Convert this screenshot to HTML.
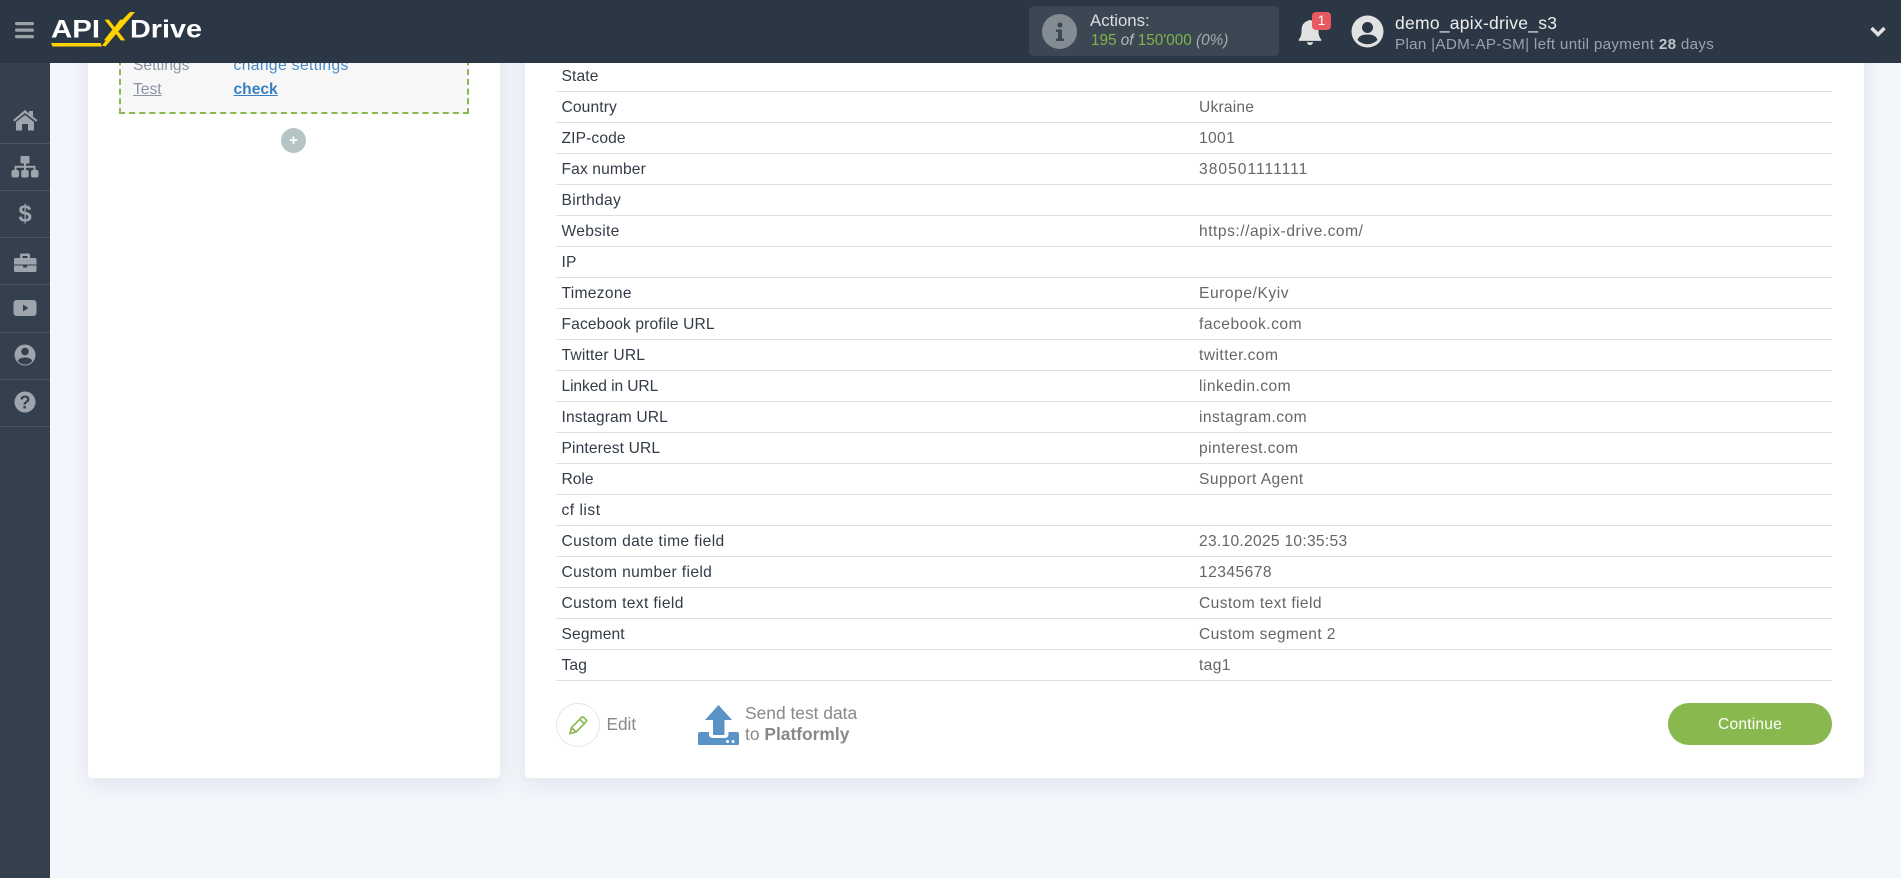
<!DOCTYPE html>
<html><head><meta charset="utf-8"><title>ApiX-Drive</title>
<style>
html,body{margin:0;padding:0;width:1901px;height:878px;overflow:hidden;background:#f3f6fb;font-family:"Liberation Sans",sans-serif}
.a{position:absolute;white-space:nowrap}
.card{position:absolute;background:#fff;border-radius:4px;box-shadow:0 6px 22px rgba(60,80,110,.10)}
.row{position:absolute;left:556px;width:1276px;height:30px;border-bottom:1px solid #e0e0e0}
.row b{position:absolute;left:5.500px;top:2px;font-weight:400;font-size:15.600px;line-height:28px;color:#333b47;letter-spacing:.12px}
.row i{position:absolute;left:643px;top:2px;font-style:normal;font-size:15.600px;line-height:28px;color:#666;letter-spacing:.35px}
.row b.w{letter-spacing:.36px}
.sep{position:absolute;left:0;width:50px;height:1px;background:#4a5665}
</style></head><body>
<div class="a" style="left:0;top:63px;width:50px;height:815px;background:#35404f"></div>
<div class="sep" style="top:143px"></div><div class="sep" style="top:190px"></div><div class="sep" style="top:237px"></div><div class="sep" style="top:284px"></div><div class="sep" style="top:332px"></div><div class="sep" style="top:379px"></div><div class="sep" style="top:426px"></div>
<svg class="a" style="left:0;top:100px" width="50" height="340" viewBox="0 0 50 340" fill="#9ea5ad">
<path d="M13 20 25 10l4 3.400V11h4v5.800l4.500 3.200-1.400 1.600L25 13 14.400 21.600z"/><path d="M16 22 25 15l9 7v8.500H28V24h-6v6.500h-6z"/>
<rect x="20.500" y="56" width="9" height="7.500" rx="1"/><rect x="24" y="63" width="2" height="7"/><rect x="15" y="65.800" width="20" height="2"/><rect x="14.500" y="66" width="2" height="4"/><rect x="33.500" y="66" width="2" height="4"/><rect x="11.500" y="70" width="7.500" height="7.500" rx="2"/><rect x="21.200" y="70" width="7.500" height="7.500" rx="2"/><rect x="31" y="70" width="7.500" height="7.500" rx="2"/>
<text x="25" y="121.500" text-anchor="middle" font-family="Liberation Sans" font-weight="700" font-size="24">$</text>
<path d="M20 158v-3q0-1.500 1.500-1.500h7q1.500 0 1.500 1.500v3h5q1.500 0 1.500 1.500v5H14v-5q0-1.500 1.500-1.500zm2.500 0h5v-2h-5z" fill-rule="evenodd"/><path d="M14 165.500h9v2h4v-2h9.500v5q0 1.500-1.500 1.500H15.500q-1.500 0-1.500-1.500z"/>
<path d="M17 200h16q3.500 0 3.500 3.500v9q0 3.500-3.500 3.500H17q-3.500 0-3.500-3.500v-9q0-3.500 3.500-3.500zm6 4.500v7l5.500-3.500z" fill-rule="evenodd"/>
<circle cx="25" cy="255" r="10.500"/><circle cx="25" cy="251.500" r="3.800" fill="#35404f"/><path d="M17.800 261c.8-2.500 3.700-3.500 7.200-3.500s6.400 1 7.200 3.500a9 9 0 0 1-14.400 0z" fill="#35404f"/>
<circle cx="25" cy="302" r="10.500"/>
<text x="25" y="308.500" text-anchor="middle" font-family="Liberation Sans" font-weight="700" font-size="18" fill="#35404f">?</text>
</svg>

<div class="card" style="left:88px;top:40px;width:412px;height:738px"></div>
<div class="card" style="left:525px;top:40px;width:1339px;height:738px"></div>

<div class="a" style="left:119px;top:40px;width:350px;height:74px;box-sizing:border-box;background:#f7f7f7;border:2px dashed #88b84e;border-top:0"></div>
<div class="a" style="left:133px;top:57px;font-size:15.600px;line-height:18px;color:#8a93a3">Settings</div>
<div class="a" style="left:233.500px;top:57px;font-size:15.600px;line-height:18px;color:#4a8ac6;letter-spacing:.4px">change settings</div>
<div class="a" style="left:133px;top:81px;font-size:15.600px;line-height:18px;color:#8a93a3;text-decoration:underline">Test</div>
<div class="a" style="left:233.500px;top:81px;font-size:15.600px;line-height:18px;color:#3a7fc0;font-weight:700;text-decoration:underline">check</div>
<div class="a" style="left:281px;top:128px;width:25px;height:25px;border-radius:50%;background:#b5c5c5;color:#fff;font-size:15px;line-height:25px;text-align:center;font-weight:700">+</div>

<div class="row" style="top:61px"><b>State</b></div>
<div class="row" style="top:92px"><b>Country</b><i style="letter-spacing:.2px">Ukraine</i></div>
<div class="row" style="top:123px"><b>ZIP-code</b><i>1001</i></div>
<div class="row" style="top:154px"><b>Fax number</b><i style="letter-spacing:1.02px">380501111111</i></div>
<div class="row" style="top:185px"><b style="letter-spacing:.3px">Birthday</b></div>
<div class="row" style="top:216px"><b style="letter-spacing:.3px">Website</b><i style="letter-spacing:.52px">https://apix-drive.com/</i></div>
<div class="row" style="top:247px"><b>IP</b></div>
<div class="row" style="top:278px"><b style="letter-spacing:.3px">Timezone</b><i style="letter-spacing:.55px">Europe/Kyiv</i></div>
<div class="row" style="top:309px"><b>Facebook profile URL</b><i style="letter-spacing:.5px">facebook.com</i></div>
<div class="row" style="top:340px"><b style="letter-spacing:.2px">Twitter URL</b><i style="letter-spacing:.45px">twitter.com</i></div>
<div class="row" style="top:371px"><b style="letter-spacing:-.1px">Linked in URL</b><i style="letter-spacing:.45px">linkedin.com</i></div>
<div class="row" style="top:402px"><b>Instagram URL</b><i style="letter-spacing:.45px">instagram.com</i></div>
<div class="row" style="top:433px"><b>Pinterest URL</b><i style="letter-spacing:.45px">pinterest.com</i></div>
<div class="row" style="top:464px"><b style="letter-spacing:0">Role</b><i style="letter-spacing:.45px">Support Agent</i></div>
<div class="row" style="top:495px"><b style="letter-spacing:.5px">cf list</b></div>
<div class="row" style="top:526px"><b class="w">Custom date time field</b><i style="letter-spacing:.28px">23.10.2025 10:35:53</i></div>
<div class="row" style="top:557px"><b class="w">Custom number field</b><i style="letter-spacing:.45px">12345678</i></div>
<div class="row" style="top:588px"><b class="w">Custom text field</b><i style="letter-spacing:.4px">Custom text field</i></div>
<div class="row" style="top:619px"><b>Segment</b><i style="letter-spacing:.37px">Custom segment 2</i></div>
<div class="row" style="top:650px"><b>Tag</b><i>tag1</i></div>

<div class="a" style="left:556px;top:703px;width:44px;height:44px;box-sizing:border-box;border:1.500px solid #dfe8e6;border-radius:50%"></div>
<svg class="a" style="left:556px;top:703px" width="44" height="44" viewBox="0 0 44 44"><path d="M14 30.500 15.500 24.500 25.500 14.500q1.200-1 2.300 0l2.200 2.200q1 1.100 0 2.300L20 29zM23.800 16.300l4.400 4.400M15.500 24.500l4.500 4.500" fill="none" stroke="#88b84e" stroke-width="1.600"/></svg>
<div class="a" style="left:606.500px;top:714px;font-size:17.200px;line-height:20px;color:#888">Edit</div>

<svg class="a" style="left:698px;top:704px" width="42" height="42" viewBox="0 0 42 42" fill="#5b93c7"><path d="M20.500 1 34 16H26.500V30q0 1-1 1H16q-1 0-1-1V16H7z"/><path d="M0 30q0-2 2-2H11V30q0 4 4 4H26.500q4 0 4-4V28H39q2 0 2 2V40q0 1-1 1H1q-1 0-1-1z"/><circle cx="29.500" cy="37.500" r="1.500" fill="#fff"/><circle cx="35" cy="37.500" r="1.500" fill="#fff"/></svg>
<div class="a" style="left:745px;top:702.500px;font-size:17.400px;line-height:21.500px;color:#888">Send test data<br>to <span style="font-weight:700">Platformly</span></div>

<div class="a" style="left:1668px;top:703px;width:164px;height:42px;border-radius:21px;background:#88b84e;color:#fff;font-size:15.600px;line-height:43.500px;text-align:center;letter-spacing:.2px">Continue</div>

<div class="a" style="left:0;top:0;width:1901px;height:63px;background:#2c3745"></div>
<svg class="a" style="left:15px;top:22px" width="20" height="17" fill="#9aa1a9"><rect y="0" width="19" height="3.200" rx="1.500"/><rect y="6.500" width="19" height="3.200" rx="1.500"/><rect y="13" width="19" height="3.200" rx="1.500"/></svg>
<svg class="a" style="left:50px;top:10px" width="160" height="42" viewBox="0 0 160 42">
<text x="1" y="27.500" font-family="Liberation Sans" font-weight="700" font-size="25" fill="#fff" textLength="49" lengthAdjust="spacingAndGlyphs">API</text>
<text x="54" y="30" font-family="Liberation Sans" font-weight="400" font-size="29" fill="#ffd200" stroke="#ffd200" stroke-width=".8" textLength="21" lengthAdjust="spacingAndGlyphs">X</text>
<path d="M1 33H50.500L52 36.500H2.500z M52 35.500 73 9 80 2h5L55.500 36.500z" fill="#ffd200"/>
<text x="80" y="27.500" font-family="Liberation Sans" font-weight="700" font-size="25" fill="#fff" textLength="72" lengthAdjust="spacingAndGlyphs">Drive</text>
</svg>

<div class="a" style="left:1029px;top:6px;width:250px;height:50px;border-radius:5px;background:#3b4854"></div>
<div class="a" style="left:1042px;top:14px;width:35px;height:35px;border-radius:50%;background:#838b93"></div>
<svg class="a" style="left:1042px;top:14px" width="35" height="35" fill="#3b4854"><circle cx="18" cy="11" r="2.500"/><path d="M14 15.500h6v9h2v2.500h-8v-2.500h2v-6.500h-2z"/></svg>
<div class="a" style="left:1090px;top:10.500px;font-size:16.800px;line-height:20px;color:#ddd">Actions:</div>
<div class="a" style="left:1091px;top:31px;font-size:15.300px;line-height:19px;color:#7fb24a">195 <em style="color:#bbb">of</em> 150'000 <em style="color:#a5abb1">(0%)</em></div>

<svg class="a" style="left:1297px;top:18px" width="26" height="28" viewBox="0 0 26 30" fill="#e2e2e2"><path d="M11 3q2-2 4 0 7 2 7 10 0 7 3 10v1.500H1V23q3-3 3-10 0-8 7-10z"/><path d="M9.500 26h7q-1 3-3.500 3t-3.500-3z"/></svg>
<div class="a" style="left:1312px;top:12px;width:19px;height:18px;border-radius:4px;background:#e85a5f;color:#fff;font-size:13.500px;line-height:18px;text-align:center">1</div>

<svg class="a" style="left:1351px;top:15px" width="33" height="33" viewBox="0 0 33 33"><circle cx="16.500" cy="16.500" r="16" fill="#e2e2e2"/><circle cx="16.500" cy="12.500" r="5.500" fill="#2c3745"/><path d="M6.500 25c1-4 5-5.500 10-5.500s9 1.500 10 5.500a14 14 0 0 1-20 0z" fill="#2c3745"/></svg>
<div class="a" style="left:1395px;top:13px;font-size:17.500px;line-height:21px;color:#eee;letter-spacing:.26px">demo_apix-drive_s3</div>
<div class="a" style="left:1395px;top:35.500px;font-size:15.200px;line-height:18px;color:#9aa3ab;letter-spacing:.31px">Plan |ADM-AP-SM| left until payment <b style="color:#c0c5ca">28</b> days</div>
<svg class="a" style="left:1869px;top:25px" width="18" height="14"><path d="M2.500 3 9 9.500 15.500 3" fill="none" stroke="#e2e2e2" stroke-width="3.500"/></svg>
</body></html>
